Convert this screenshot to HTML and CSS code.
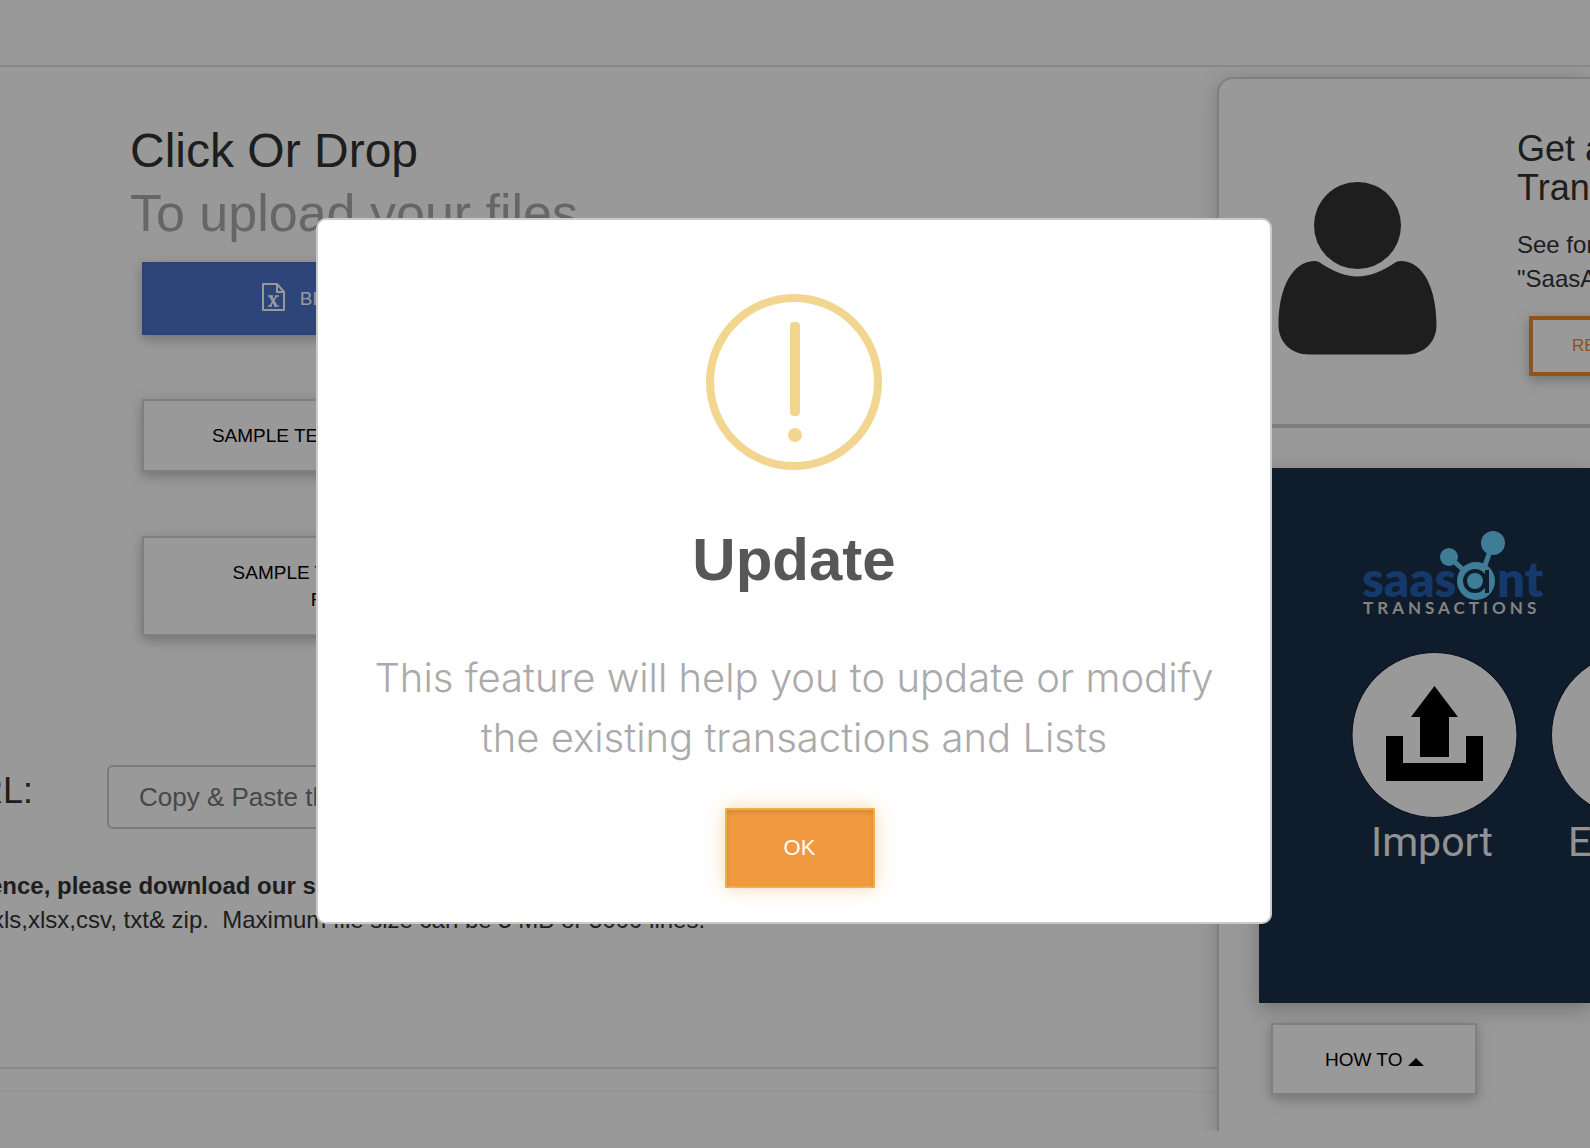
FILE: index.html
```html
<!DOCTYPE html>
<html lang="en">
<head>
<meta charset="utf-8">
<meta name="viewport" content="width=device-width, initial-scale=1">
<title>Upload</title>
<link rel="stylesheet" href="styles.css">
</head>
<body>
<header class="topbar"></header>
<div class="layout">
  <main class="upload">
    <h1 class="upload-title">Click Or Drop <span class="upload-sub">To upload your files</span></h1>
    <div class="actions">
      <button class="btn btn-blue" type="button">
        <svg class="file-icon" viewBox="0 0 23 28" aria-hidden="true">
          <path d="M1 1h14l7 8v18H1z M15 1v8h7" fill="none" stroke="currentColor" stroke-width="2" stroke-linejoin="round"/>
          <path d="M8.500 13l5.500 10" fill="none" stroke="currentColor" stroke-width="3"/>
          <path d="M14.500 13l-6.500 10M6 13h5M13 13h4M6 23h4M12 23h5" fill="none" stroke="currentColor" stroke-width="1.500"/>
        </svg>
        BROWSE
      </button>
      <button class="btn" type="button">SAMPLE TEMPLATE XLS</button>
      <button class="btn" type="button">SAMPLE TEMPLATE<br>FX</button>
    </div>
    <div class="url-row">
      <label class="url-label" for="url">URL:</label>
      <input class="url-input" id="url" type="text" placeholder="Copy &amp; Paste the URL">
    </div>
    <div class="notes">
      <p class="note"><b>ence, please download our sample file</b></p>
      <p class="note note-formats">xls,xlsx,csv, txt&amp; zip.&nbsp; Maximum file size can be 5 MB or 5000 lines.</p>
    </div>
    <div class="rule"></div>
    <div class="rule-faint"></div>
  </main>
  <aside class="side">
    <section class="demo">
      <svg class="person" viewBox="0 0 160 174" aria-hidden="true">
        <circle cx="79.500" cy="43.500" r="43.500"/>
        <path d="M36 79C14 80 .5 106 .5 143C.5 160 13 172.500 31 172.500H128C146 172.500 158.500 160 158.500 143C158.500 106 145 80 124 79Q120 79 118 80Q97 94.500 79.500 94.500Q62 94.500 41 80Q39 79 36 79Z"/>
      </svg>
      <div class="demo-body">
        <h2 class="demo-title">Get a Demo<br>Transactions</h2>
        <p class="demo-text">See for yourself<br>"SaasAnt Transactions"</p>
        <button class="btn btn-orange" type="button">REQUEST</button>
      </div>
    </section>
    <div class="side-rule"></div>
    <div class="banner">
      <svg class="banner-art" viewBox="0 0 560 535" role="img" aria-label="SaasAnt Transactions">
        <text class="logo-word" x="103" y="129">saas</text>
        <text class="logo-word" x="238" y="129">nt</text>
        <g fill="#69cffb" stroke="#69cffb">
          <path d="M190 89L208 105M234 75L225 100" stroke-width="5"/>
          <circle cx="190" cy="89" r="9" stroke="none"/>
          <circle cx="234" cy="75" r="12" stroke="none"/>
          <circle cx="217" cy="113" r="19" stroke="none"/>
          <circle cx="216" cy="113" r="10" fill="none" stroke="#192f48" stroke-width="4"/>
          <path d="M228 102V125" stroke="#192f48" stroke-width="4"/>
        </g>
        <text class="logo-sub" x="104" y="146">TRANSACTIONS</text>
        <circle cx="175.500" cy="267" r="82.500" fill="#fff" stroke="#0a1430"/>
        <path d="M175.500 218L199 249H190V289H161V249H152Z"/>
        <path d="M127 268H144V295H207V268H224V313H127Z"/>
        <circle cx="375" cy="267" r="82.500" fill="#fff" stroke="#0a1430"/>
        <text class="art-label" x="112" y="388">Import</text>
        <text class="art-label" x="309" y="388">Export</text>
      </svg>
    </div>
    <button class="btn btn-howto" type="button">HOW TO
      <svg class="caret" viewBox="0 0 16 8" aria-hidden="true"><path d="M0 8L8 0L16 8Z"/></svg>
    </button>
  </aside>
</div>
<div class="overlay">
  <div class="modal" role="alertdialog" aria-modal="true" aria-labelledby="modal-title" aria-describedby="modal-text">
    <svg class="warning" viewBox="0 0 176 176" aria-hidden="true">
      <circle cx="88" cy="88" r="84" fill="none" stroke="#f2d58f" stroke-width="8"/>
      <rect x="84" y="28" width="10" height="94" rx="4" fill="#f2d58f"/>
      <circle cx="89" cy="141" r="7" fill="#f2d58f"/>
    </svg>
    <h2 class="modal-title" id="modal-title">Update</h2>
    <p class="modal-text" id="modal-text">This feature will help you to update or modify the existing transactions and Lists</p>
    <button class="btn-ok" type="button">OK</button>
  </div>
</div>
</body>
</html>
```

FILE: styles.css
```css
* { box-sizing: border-box; }
html, body { height: 100%; }
body {
  margin: 0;
  overflow: hidden;
  background: #fff;
  color: #333;
  font-family: "Liberation Sans", Arial, sans-serif;
  font-size: 24px;
  line-height: 34px;
}
h1, h2, p { margin: 0; font-weight: 400; }
button, input { font-family: inherit; }

.topbar { height: 67px; border-bottom: 2px solid #e2e2e2; }
.layout { display: grid; grid-template-columns: minmax(0, 1fr) 373px; overflow: hidden; }

.upload { padding: 53px 0 39px 130px; }
.upload-title { font-size: 48px; line-height: 62px; }
.upload-sub { display: block; font-size: 52px; color: #aaa; }
.actions {
  display: flex;
  flex-direction: column;
  gap: 64px;
  width: 362px;
  margin: 18px 0 0 12px;
}
.btn {
  padding: 21px 20px;
  border: 2px solid #d4d4d4;
  background: #fff;
  color: #000;
  font-size: 19px;
  line-height: 27px;
  white-space: nowrap;
  box-shadow: 0 4px 10px rgba(0, 0, 0, .2), 0 4px 20px rgba(0, 0, 0, .08);
}
.btn-blue {
  display: flex;
  align-items: center;
  justify-content: center;
  gap: 15px;
  border-color: #4870c6;
  background: #4c73c8;
  color: #fff;
}
.file-icon { width: 23px; height: 28px; margin: -4px 0 0; }

.url-row { display: flex; align-items: flex-start; margin: 129px 100px 0 -179px; }
.url-label { width: 156px; padding-top: 6px; font-size: 36px; line-height: 40px; }
.url-input {
  flex: 1;
  height: 64px;
  padding: 0 30px;
  border: 2px solid #ccc;
  border-radius: 6px;
  background: #fff;
  font-size: 26px;
}
.url-input::placeholder { color: #777; opacity: 1; }
.notes { margin: 40px 0 130px -141px; }
.note { white-space: nowrap; }
.note-formats { padding-left: 3px; }
.rule { height: 2px; margin-left: -130px; background: #e2e2e2; }
.rule-faint { height: 1px; margin: 22px 0 0 -130px; background: #f4f4f4; }

.side {
  margin-top: 10px;
  border: 2px solid #d4d4d4;
  border-width: 2px 0 0 2px;
  border-radius: 16px 0 0 0;
  background: #fff;
  box-shadow: 0 4px 20px rgba(0, 0, 0, .2);
  white-space: nowrap;
}
.demo { display: flex; gap: 79px; padding: 50px 0 48px 59px; overflow: hidden; }
.person { flex: none; width: 160px; height: 174px; margin-top: 53px; fill: #333; }
.demo-title { font-size: 36px; line-height: 39px; }
.demo-text { margin: 21px 0 20px; }
.btn-orange {
  margin-left: 12px;
  padding: 14px 39px;
  border: 4px solid #ee8a2d;
  color: #ee8a2d;
  font-size: 17px;
  line-height: 24px;
}
.side-rule { height: 4px; margin-left: 40px; background: #d0d0d0; }
.banner {
  margin: 40px 0 20px 40px;
  height: 535px;
  overflow: hidden;
  background: #192f48;
  box-shadow: 0 6px 20px rgba(0, 0, 0, .25);
}
.banner-art { display: block; width: 560px; height: 535px; }
.logo-word { font: 800 49px Lato, sans-serif; fill: #265fb2; }
.logo-sub { font: 700 17px Lato, sans-serif; letter-spacing: 4px; fill: #ddd; }
.art-label { font: 400 41px Roboto, sans-serif; fill: #f4f4f4; }
.btn-howto { margin-left: 52px; padding: 21px 51px 20px 52px; }
.caret { width: 16px; height: 8px; }

.overlay {
  position: fixed;
  inset: 0;
  display: flex;
  align-items: center;
  justify-content: center;
  padding: 0 2px 6px 0;
  background: rgba(0, 0, 0, .4);
}
.modal {
  display: flex;
  flex-direction: column;
  align-items: center;
  width: 956px;
  max-width: 100%;
  padding: 74px 50px 34px;
  border: 2px solid #cacaca;
  border-radius: 10px;
  background: #fff;
  text-align: center;
}
.warning { width: 176px; height: 176px; }
.modal-title { margin: 50px 0 48px; font-size: 60px; font-weight: 700; line-height: 80px; color: #575757; }
.modal-text { font-family: Inter, "Liberation Sans", sans-serif; font-size: 40px; font-weight: 300; line-height: 60px; color: #aaa; }
.btn-ok {
  width: 150px;
  height: 80px;
  margin: 40px 0 0 11px;
  border: 2px solid #ebb347;
  background: #f0993e;
  color: #fff;
  font-size: 22px;
  box-shadow: inset 0 2px 4px rgba(0, 0, 0, .125), 0 0 18px rgba(240, 153, 62, .4);
}
```
